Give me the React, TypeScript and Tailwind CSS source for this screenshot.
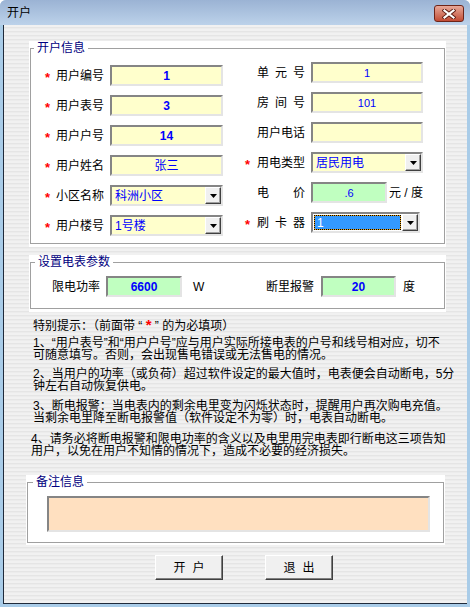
import React from 'react';

const font = "font-['Liberation_Sans','Noto_Sans_CJK_SC',sans-serif]";
const sunken =
  'border-2 border-t-[#858585] border-l-[#858585] border-r-[#e4e4e4] border-b-[#e4e4e4]';

function Star({ w }: { w: string }) {
  return (
    <span className={`${w} shrink-0 self-start pt-[6px] text-[13px] leading-[13px] font-bold text-[#ff0000]`}>
      *
    </span>
  );
}

function Spaced({ text }: { text: string }) {
  return (
    <span className="w-[48px] flex justify-between">
      {[...text].map((c, i) => (
        <span key={i}>{c}</span>
      ))}
    </span>
  );
}

function Box({ children, className }: { children?: React.ReactNode; className: string }) {
  return (
    <div className={`h-[21px] shrink-0 ${sunken} flex items-center justify-center ${className}`}>
      {children}
    </div>
  );
}

function DropBtn() {
  return (
    <span className="w-[16px] shrink-0 flex items-center justify-center bg-[#f0f0f0] border border-t-white border-l-white border-r-[#404040] border-b-[#404040] shadow-[inset_-1px_-1px_0_#a0a0a0]">
      <svg width="7" height="4" viewBox="0 0 7 4">
        <path d="M0 0h7L3.5 4z" fill="#000" />
      </svg>
    </span>
  );
}

function Combo({ text, className }: { text: string; className: string }) {
  return (
    <div className={`h-[21px] shrink-0 ${sunken} bg-[#ffffcc] flex items-stretch ${className}`}>
      <span className="flex-1 pl-[3px] flex items-center text-[#0000ff]">{text}</span>
      <DropBtn />
    </div>
  );
}

function LRow({ label, children }: { label: string; children: React.ReactNode }) {
  return (
    <div className="h-[21px] flex items-center">
      <Star w="w-[11px]" />
      <span className="w-[54px]">{label}</span>
      {children}
    </div>
  );
}

function RRow({ star, label, children }: { star?: boolean; label: React.ReactNode; children: React.ReactNode }) {
  return (
    <div className="h-[21px] flex items-center">
      {star ? <Star w="w-[12px]" /> : <span className="w-[12px] shrink-0" />}
      <span className="w-[54px] shrink-0">{label}</span>
      {children}
    </div>
  );
}

function CloseBtn() {
  return (
    <div className="mt-[5px] w-[30px] h-[17px] rounded-[3px] border border-[#6e2418] bg-gradient-to-b from-[#e8a899] via-[#d47b67] to-[#c24a33] flex items-center justify-center">
      <svg width="14" height="10" viewBox="0 0 14 10">
        <path d="M2.5 1.5L11.5 8.5M11.5 1.5L2.5 8.5" stroke="#5a1a10" strokeWidth="4" strokeLinecap="square" />
        <path d="M2.5 1.5L11.5 8.5M11.5 1.5L2.5 8.5" stroke="#ffffff" strokeWidth="2.2" strokeLinecap="square" />
      </svg>
    </div>
  );
}

function Button({ a, b }: { a: string; b: string }) {
  return (
    <div className="w-[68px] h-[25px] bg-[#f0f0f0] border border-t-white border-l-white border-r-[#404040] border-b-[#404040] shadow-[inset_-1px_-1px_0_#808080] flex items-center justify-center gap-[7px]">
      <span>{a}</span>
      <span>{b}</span>
    </div>
  );
}

export default function App() {
  return (
    <div className="w-[470px] h-[607px] bg-white">
      <div className={`w-[470px] h-[607px] flex flex-col bg-[#a9cce8] rounded-t-[6px] overflow-hidden text-[12px] leading-[14px] text-black ${font}`}>
        <div className="h-[25px] shrink-0 flex items-start justify-between bg-gradient-to-b from-[#9bb3d4] to-[#bcd2ea] pl-[7px] pr-[6px]">
          <span className="mt-[5px] leading-[16px]">开户</span>
          <CloseBtn />
        </div>

        <div className="flex-1 mx-[3px] mb-[3px] border-l border-b border-[#1f2a3a] flex flex-col bg-[image:repeating-linear-gradient(180deg,#f1f1f1_0px,#f1f1f1_2px,#e5e5e5_2px,#e5e5e5_3px,#ececec_3px,#ececec_4px)]">
          {/* 开户信息 */}
          <div className="mt-[16px] ml-[25px] w-[417px] bg-white px-px pb-[3px]">
            <fieldset className="h-[203px] border border-[#a0a0a0]">
              <legend className="ml-[3px] px-[3px] leading-[14px] text-[#000080]">开户信息</legend>
              <div className="flex items-start pl-[14px]">
                <div className="mt-[10px] flex flex-col gap-[9px]">
                  <LRow label="用户编号">
                    <Box className="w-[113px] bg-[#ffffcc] font-bold text-[#0000ff]">1</Box>
                  </LRow>
                  <LRow label="用户表号">
                    <Box className="w-[113px] bg-[#ffffcc] font-bold text-[#0000ff]">3</Box>
                  </LRow>
                  <LRow label="用户户号">
                    <Box className="w-[113px] bg-[#ffffcc] font-bold text-[#0000ff]">14</Box>
                  </LRow>
                  <LRow label="用户姓名">
                    <Box className="w-[113px] bg-[#ffffcc] text-[#0000ff]">张三</Box>
                  </LRow>
                  <LRow label="小区名称">
                    <Combo text="科洲小区" className="w-[113px]" />
                  </LRow>
                  <LRow label="用户楼号">
                    <Combo text="1号楼" className="w-[113px]" />
                  </LRow>
                </div>

                <div className="mt-[7px] ml-[22px] flex flex-col gap-[9px]">
                  <RRow label={<Spaced text="单元号" />}>
                    <Box className="w-[112px] bg-[#ffffcc] text-[11px] text-[#0000ff]">1</Box>
                  </RRow>
                  <RRow label={<Spaced text="房间号" />}>
                    <Box className="w-[112px] bg-[#ffffcc] text-[11px] text-[#0000ff]">101</Box>
                  </RRow>
                  <RRow label="用户电话">
                    <Box className="w-[112px] bg-[#ffffcc]" />
                  </RRow>
                  <RRow star label="用电类型">
                    <Combo text="居民用电" className="w-[112px]" />
                  </RRow>
                  <RRow label={<Spaced text="电价" />}>
                    <Box className="w-[76px] bg-[#c0ffc0] text-[11px] text-[#0000ff]">.6</Box>
                    <span className="ml-[2px]">元 / 度</span>
                  </RRow>
                  <RRow star label={<Spaced text="刷卡器" />}>
                    <div className={`h-[21px] w-[109px] ${sunken} bg-white flex items-stretch`}>
                      <span className="flex-1 m-px flex bg-[#e8a317]">
                        <span className="flex-1 flex items-center pl-[2px] border border-dotted border-black bg-[#3399ff] bg-clip-padding text-white">
                          1
                        </span>
                      </span>
                      <DropBtn />
                    </div>
                  </RRow>
                </div>
              </div>
            </fieldset>
          </div>

          {/* 设置电表参数 */}
          <div className="mt-[8px] ml-[25px] w-[417px] bg-white px-px pb-[3px]">
            <fieldset className="h-[54px] border border-[#a0a0a0]">
              <legend className="ml-[4px] px-[3px] leading-[14px] text-[#000080]">设置电表参数</legend>
              <div className="mt-[7px] pl-[21px] h-[21px] flex items-center">
                <span className="w-[54px]">限电功率</span>
                <Box className="w-[76px] bg-[#c0ffc0] font-bold text-[#0000ff]">6600</Box>
                <span className="ml-[11px] w-[73px]">W</span>
                <span className="w-[55px]">断里报警</span>
                <Box className="w-[75px] bg-[#c0ffc0] font-bold text-[#0000ff]">20</Box>
                <span className="ml-[7px]">度</span>
              </div>
            </fieldset>
          </div>

          {/* 提示 */}
          <div className="mt-[7px] ml-[29px] leading-[12px] whitespace-nowrap">
            <p>
              特别提示：（前面带 “ <span className="text-[#ff0000] text-[15px] font-bold">*</span> ” 的为必填项）
            </p>
            <p className="mt-[5px]">
              1、“用户表号”和“用户户号”应与用户实际所接电表的户号和线号相对应，切不
              <br />
              可随意填写。否则，会出现售电错误或无法售电的情况。
            </p>
            <p className="mt-[7px]">
              2、当用户的功率（或负荷）超过软件设定的最大值时，电表便会自动断电，5分
              <br />
              钟左右自动恢复供电。
            </p>
            <p className="mt-[8px]">
              3、断电报警：当电表内的剩余电里变为闪烁状态时，提醒用户再次购电充值。
              <br />
              当剩余电里降至断电报警值（软件设定不为零）时，电表自动断电。
            </p>
            <p className="mt-[9px] -ml-[2px]">
              4、请务必将断电报警和限电功率的含义以及电里用完电表即行断电这三项告知
              <br />
              用户，以免在用户不知情的情况下，造成不必要的经济损失。
            </p>
          </div>

          {/* 备注信息 */}
          <div className="mt-[18px] ml-[22px] w-[419px] bg-white px-px pb-[2px]">
            <fieldset className="h-[68px] border border-[#a0a0a0]">
              <legend className="ml-[5px] px-[3px] leading-[14px] text-[#000080]">备注信息</legend>
              <div className={`mt-[7px] ml-[19px] w-[383px] h-[36px] ${sunken} bg-[#ffe0c0]`} />
            </fieldset>
          </div>

          <div className="mt-[10px] ml-[151px] flex gap-[42px]">
            <Button a="开" b="户" />
            <Button a="退" b="出" />
          </div>
        </div>
      </div>
    </div>
  );
}
